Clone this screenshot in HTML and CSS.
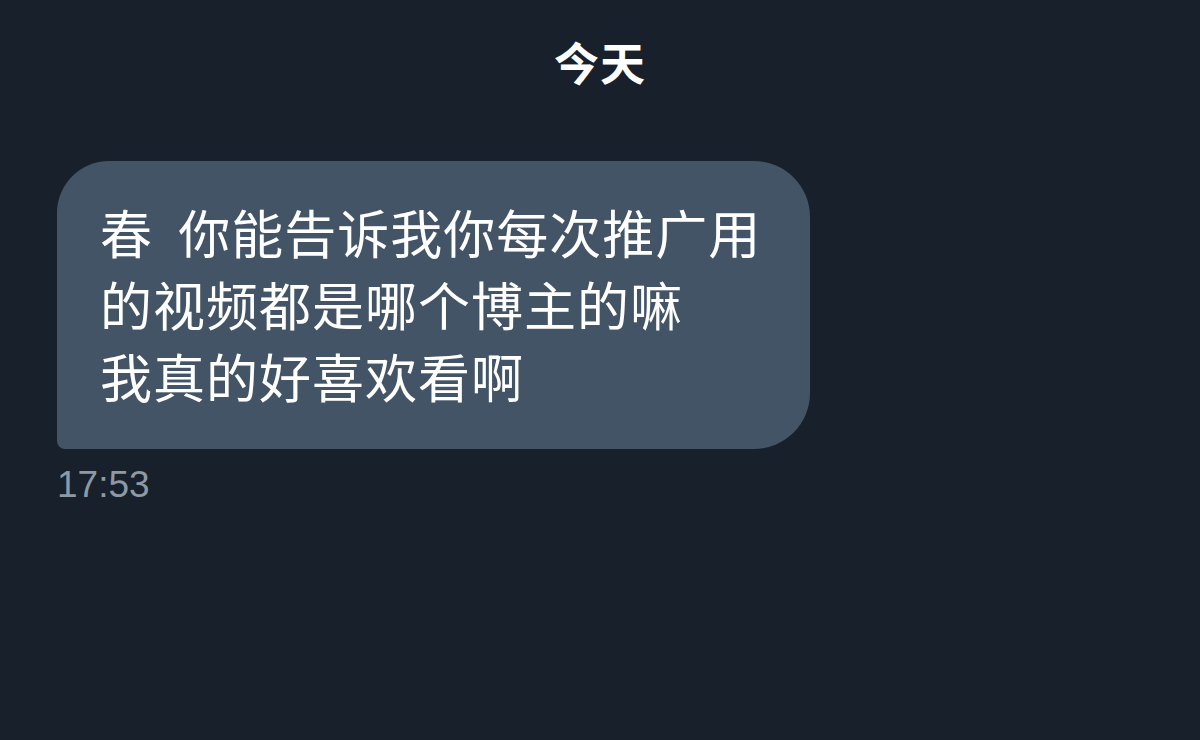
FILE: index.html
```html
<!DOCTYPE html>
<html lang="zh">
<head>
<meta charset="utf-8">
<title>今天</title>
<link rel="stylesheet" href="styles.css">
</head>
<body>
<main class="chat">
  <div class="day">今天</div>
  <div class="msg">
    <div class="bubble">春&nbsp;&nbsp;你能告诉我你每次推广用<br>的视频都是哪个博主的嘛<br>我真的好喜欢看啊</div>
    <div class="time">17:53</div>
  </div>
</main>
</body>
</html>
```
FILE: styles.css
```css
html, body {
  margin: 0;
  padding: 0;
  background: #18202b;
  width: 1200px;
  height: 740px;
  overflow: hidden;
}
.chat {
  display: flex;
  flex-direction: column;
  padding-top: 32px;
}
.day {
  text-align: center;
  color: #ffffff;
  font-family: "Noto Sans CJK SC", "Noto Sans", sans-serif;
  font-weight: 700;
  font-size: 45px;
  line-height: 60px;
  letter-spacing: 1px;
}
.msg {
  margin-top: 69px;
  margin-left: 57px;
  display: flex;
  flex-direction: column;
  align-items: flex-start;
}
.bubble {
  box-sizing: border-box;
  width: 753px;
  background: #435466;
  color: #ffffff;
  font-family: "Noto Sans CJK SC", "Noto Sans", sans-serif;
  font-size: 52px;
  line-height: 72px;
  letter-spacing: 1px;
  padding: 35px 40px 37px 43px;
  border-radius: 52px 56px 56px 8px;
}
.time {
  margin-top: 14px;
  color: #8e99a6;
  font-family: "Liberation Sans", Arial, sans-serif;
  font-size: 37px;
  line-height: 44px;
}
```
